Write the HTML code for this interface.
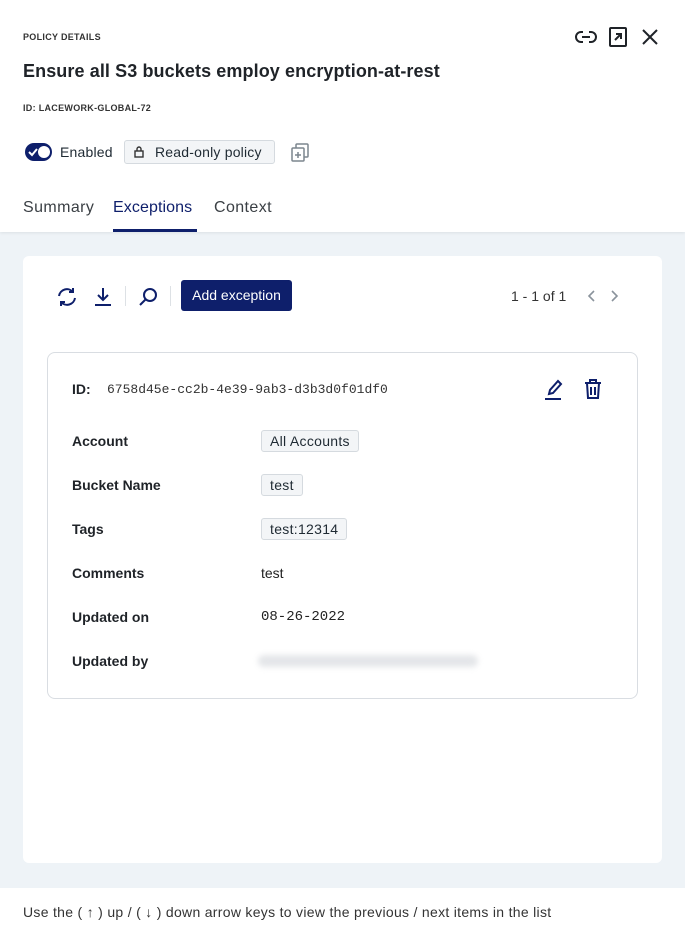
<!DOCTYPE html>
<html><head><style>
*{margin:0;padding:0;box-sizing:border-box}
body{width:685px;height:936px;position:relative;background:#eef3f7;font-family:"Liberation Sans",sans-serif;color:#1f2328;overflow:hidden}
.a{position:absolute;white-space:nowrap}
.hdr{position:absolute;left:0;top:0;width:685px;height:232px;background:#fff;box-shadow:0 1px 3px rgba(0,0,0,.08)}
.chip{position:absolute;height:22px;border:1px solid #d5dadf;background:#f3f5f7;border-radius:3px;font-size:14px;line-height:20px;padding:0 8px;color:#1f2a33;letter-spacing:.3px}
.lbl{position:absolute;left:72px;font-size:14px;font-weight:bold;color:#1f2328}
.mono{font-family:"Liberation Mono",monospace}
</style></head><body>
<div class="hdr"></div>
<div class="a" style="left:23px;top:32px;font-size:9px;font-weight:bold;color:#333;letter-spacing:.3px">POLICY DETAILS</div>
<div class="a" style="left:23px;top:61px;font-size:18px;font-weight:bold;color:#1f2328;letter-spacing:.1px">Ensure all S3 buckets employ encryption-at-rest</div>
<div class="a" style="left:23px;top:103px;font-size:9px;font-weight:bold;color:#333;letter-spacing:.3px">ID: LACEWORK-GLOBAL-72</div>
<svg class="a" style="left:575px;top:27px" width="22" height="20" viewBox="0 0 22 20" fill="none" stroke="#1f2328" stroke-width="2"><path d="M8 5H6a5 5 0 000 10h2M14 5h2a5 5 0 010 10h-2M7 10h8"/></svg>
<svg class="a" style="left:608px;top:27px" width="20" height="20" viewBox="0 0 20 20" fill="none" stroke="#1f2328" stroke-width="2"><rect x="2" y="1" width="16" height="18" rx="1"/><path d="M7 13l6-6M8 7h5v5"/></svg>
<svg class="a" style="left:641px;top:28px" width="18" height="18" viewBox="0 0 18 18" stroke="#1f2328" stroke-width="2"><path d="M2 2l14 14M16 2L2 16"/></svg>
<div class="a" style="left:25px;top:143px;width:27px;height:18px;border-radius:9px;background:#0e1f6b"></div>
<div class="a" style="left:38px;top:146px;width:12px;height:12px;border-radius:6px;background:#fff"></div>
<svg class="a" style="left:27px;top:146px" width="12" height="12" viewBox="0 0 12 12" fill="none" stroke="#fff" stroke-width="2"><path d="M2 6l3 3 5-6"/></svg>
<div class="a" style="left:60px;top:144px;font-size:14px;color:#1f2a33;letter-spacing:.2px">Enabled</div>
<div class="a" style="left:124px;top:140px;width:151px;height:24px;border:1px solid #d5dadf;background:#f3f5f7;border-radius:3px"></div>
<svg class="a" style="left:134px;top:146px" width="10" height="12" viewBox="0 0 10 12" fill="none" stroke="#333" stroke-width="1.4"><rect x="1" y="5" width="8" height="6"/><path d="M3 5V3a2 2 0 014 0v2"/></svg>
<div class="a" style="left:155px;top:144px;font-size:14px;color:#1f2a33;letter-spacing:.2px">Read-only policy</div>
<svg class="a" style="left:290px;top:142px" width="20" height="20" viewBox="0 0 20 20" fill="none" stroke="#7c858e" stroke-width="1.5"><rect x="6" y="2" width="12" height="13" rx="1"/><rect x="2" y="6" width="12" height="13" rx="1" fill="#fff"/><path d="M8 10v6M5 13h6"/></svg>
<div class="a" style="left:23px;top:199px;font-size:16px;color:#3a3f44;letter-spacing:.4px">Summary</div>
<div class="a" style="left:113px;top:199px;font-size:16px;color:#0e1f6b;letter-spacing:.1px">Exceptions</div>
<div class="a" style="left:214px;top:199px;font-size:16px;color:#3a3f44;letter-spacing:.4px">Context</div>
<div class="a" style="left:113px;top:229px;width:84px;height:3px;background:#0e1f6b"></div>
<div class="a" style="left:23px;top:256px;width:639px;height:607px;background:#fff;border-radius:6px"></div>
<svg class="a" style="left:56px;top:286px" width="22" height="22" viewBox="0 0 22 22" fill="none" stroke="#0e1f6b" stroke-width="2"><path d="M3 10a8 8 0 0114-4M19 12a8 8 0 01-14 4"/><path d="M17 2v4h-4M5 20v-4h4"/></svg>
<svg class="a" style="left:93px;top:286px" width="20" height="22" viewBox="0 0 20 22" fill="none" stroke="#0e1f6b" stroke-width="2"><path d="M10 2v12M5 9l5 5 5-5M2 19h16"/></svg>
<div class="a" style="left:125px;top:286px;width:1px;height:20px;background:#dde1e5"></div>
<svg class="a" style="left:138px;top:286px" width="22" height="22" viewBox="0 0 22 22" fill="none" stroke="#0e1f6b" stroke-width="2"><circle cx="12" cy="9" r="6"/><path d="M8 13l-6 6"/></svg>
<div class="a" style="left:170px;top:286px;width:1px;height:20px;background:#dde1e5"></div>
<div class="a" style="left:181px;top:280px;width:111px;height:31px;background:#0e1f6b;border-radius:3px;color:#fff;font-size:14px;line-height:31px;text-align:center">Add exception</div>
<div class="a" style="left:511px;top:288px;font-size:14px;color:#333">1 - 1 of 1</div>
<svg class="a" style="left:583px;top:289px" width="40" height="14" viewBox="0 0 40 14" fill="none" stroke="#8a939c" stroke-width="1.6"><path d="M11 2L6 7l5 5M29 2l5 5-5 5"/></svg>
<div class="a" style="left:47px;top:352px;width:591px;height:347px;border:1px solid #d9dde2;border-radius:8px"></div>
<div class="lbl" style="top:381px">ID:</div>
<div class="a mono" style="left:107px;top:382px;font-size:13px;color:#333">6758d45e-cc2b-4e39-9ab3-d3b3d0f01df0</div>
<svg class="a" style="left:543px;top:377px" width="20" height="24" viewBox="0 0 20 24" fill="none" stroke="#0e1f6b" stroke-width="2"><path d="M6 17l1-4 8-9 3 3-8 9z"/><path d="M2 22h16"/></svg>
<svg class="a" style="left:583px;top:378px" width="20" height="22" viewBox="0 0 20 22" fill="none" stroke="#0e1f6b" stroke-width="2"><path d="M2 5h16M7 5V2h6v3M4 5l1 15h10l1-15M8 9v8M12 9v8"/></svg>
<div class="lbl" style="top:433px">Account</div>
<div class="chip" style="left:261px;top:430px">All Accounts</div>
<div class="lbl" style="top:477px">Bucket Name</div>
<div class="chip" style="left:261px;top:474px">test</div>
<div class="lbl" style="top:521px">Tags</div>
<div class="chip" style="left:261px;top:518px">test:12314</div>
<div class="lbl" style="top:565px">Comments</div>
<div class="a" style="left:261px;top:565px;font-size:14px;color:#222">test</div>
<div class="lbl" style="top:609px">Updated on</div>
<div class="a mono" style="left:261px;top:609px;font-size:14px;color:#222">08-26-2022</div>
<div class="lbl" style="top:653px">Updated by</div>
<div class="a" style="left:258px;top:655px;width:220px;height:12px;background:#e4e6e9;border-radius:6px;filter:blur(3px)"></div>
<div class="a" style="left:0;top:888px;width:685px;height:48px;background:#fff"></div>
<div class="a" style="left:23px;top:904px;font-size:14px;color:#333;letter-spacing:.3px">Use the ( &#8593; ) up / ( &#8595; ) down arrow keys to view the previous / next items in the list</div>
</body></html>
